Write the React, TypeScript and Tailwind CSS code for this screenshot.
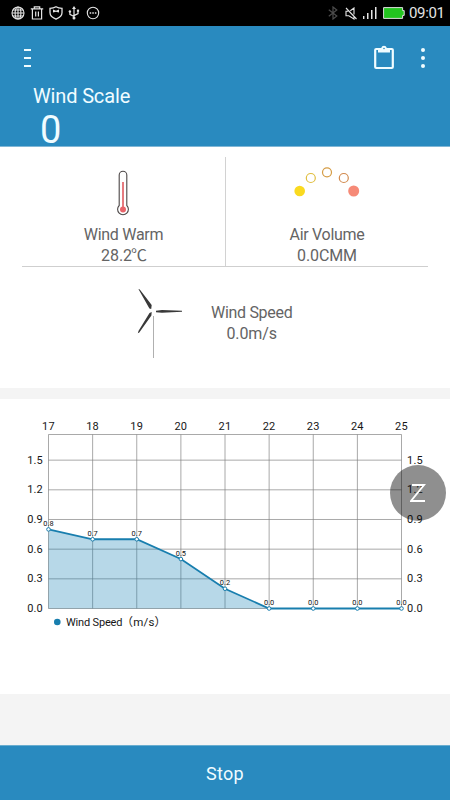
import React from "react";

const FONT = "font-['Roboto','Noto_Sans_CJK_SC',sans-serif]";

function StatusBar() {
  return (
    <div className="flex h-[26px] items-center justify-between bg-black pl-[11px] pr-[6px]">
      <div className="flex items-center gap-[5px] text-[#e4e4e4]">
        <svg width="14" height="14" viewBox="0 0 14 14" fill="none" stroke="currentColor" strokeWidth="1.1">
          <circle cx="7" cy="7" r="6" />
          <ellipse cx="7" cy="7" rx="2.9" ry="6" />
          <path d="M1 7h12M7 1v12M2 4h10M2 10h10" />
        </svg>
        <svg width="14" height="14" viewBox="0 0 14 14" fill="none" stroke="currentColor" strokeWidth="1.2">
          <path d="M0.8 2.8h12.4M4.3 2.6V.8h5.4v1.8M2.4 3v10h9.2V3M5.7 5.6v4.8M8.4 5.6v4.8" />
        </svg>
        <svg width="14" height="14" viewBox="0 0 14 14" fill="none" stroke="currentColor" strokeWidth="1.3">
          <path d="M7 .8C5 2 3 2.3 1 2.3v4.5c0 3 2.7 5 6 6.4 3.300-1.400 6-3.400 6-6.400V2.300C11 2.300 9 2 7 .8Z" />
          <path d="M4 3.600l3 1.200 3-1.200v3L7 5.800 4 6.600Z" fill="currentColor" stroke="none" />
        </svg>
        <svg className="-ml-px" width="14" height="14" viewBox="0 0 14 14" fill="none" stroke="currentColor" strokeWidth="1.2">
          <path d="M7 12V2M7 10.500L2.900 8.300V5.500M7 9.600l4-2V4.500" />
          <path d="M5 3l2-3 2 3Z" fill="currentColor" stroke="none" />
          <circle cx="7" cy="12" r="1.500" fill="currentColor" stroke="none" />
          <circle cx="2.900" cy="5.500" r="1.200" fill="currentColor" stroke="none" />
          <path d="M9.900 3.600h2.200v2.200H9.900z" fill="currentColor" stroke="none" />
        </svg>
        <svg width="14" height="14" viewBox="0 0 14 14" fill="none" stroke="currentColor" strokeWidth="1.100">
          <circle cx="7" cy="7" r="5.700" />
          <path d="M3.700 7h1.500M6.300 7h1.500M8.900 7h1.500" strokeWidth="1.400" />
        </svg>
      </div>
      <div className="flex items-center text-[#e4e4e4]">
        <svg className="mr-[7px]" width="10" height="14" viewBox="0 0 10 14" fill="none" stroke="#4c4c4c" strokeWidth="1.200">
          <path d="M.8 3.700l8 6.300L5 13V1l3.800 3-8 6.300" />
        </svg>
        <svg className="mr-[6px]" width="12" height="13" viewBox="0 0 12 13" fill="none" stroke="currentColor" strokeWidth="1.100">
          <path d="M1 1l10.500 11M3.200 4.200H1v4.500h2.800L9 12V9.500M5.300 3.800L9 1v6.500" />
        </svg>
        <svg className="mr-[6px]" width="14" height="12" viewBox="0 0 14 12" fill="currentColor">
          <path d="M0 9h1.400v3H0zM4 6h1.500v6H4zM8 3h1.500v9H8zM12 0h1.500v12H12z" />
        </svg>
        <svg className="mr-[4px]" width="22" height="12" viewBox="0 0 22 12">
          <path d="M.6.6h19v3h1.600v4.800h-1.600v3H.6z" fill="#22c51f" stroke="#dedede" strokeWidth="1" />
        </svg>
        <span className="w-[35px] whitespace-nowrap text-[15px] leading-[26px] tracking-[-0.35px]">09:01</span>
      </div>
    </div>
  );
}

function Header() {
  return (
    <header className="h-[121px] border-b border-[#81b7d6] bg-[#298abf] text-[#f0fcff]">
      <div className="flex h-[60px] items-center justify-between pl-6 pr-[25px] pt-[3px]">
        <svg width="8" height="20" viewBox="0 0 8 20" fill="currentColor">
          <path d="M0 1h7v2H0zM0 9h7v2H0zM0 17h7v2H0z" />
        </svg>
        <div className="flex items-center gap-[26px]">
          <svg className="-mt-px" width="22" height="26" viewBox="0 0 22 26" fill="none" stroke="currentColor">
            <rect x="2.200" y="5" width="17.600" height="19" rx="1" strokeWidth="2.200" />
            <path d="M5 4h3.200a2.900 2.900 0 0 1 5.600 0H17v4.500H5z" fill="currentColor" stroke="none" />
            <circle cx="11" cy="4.500" r=".8" fill="#298abf" stroke="none" />
          </svg>
          <svg width="4" height="22" viewBox="0 0 4 22" fill="currentColor">
            <circle cx="2" cy="3" r="2" />
            <circle cx="2" cy="11" r="2" />
            <circle cx="2" cy="19" r="2" />
          </svg>
        </div>
      </div>
      <div className="pl-[33px] text-[20px] leading-[21px] tracking-[-0.15px]">Wind Scale</div>
      <div className="pl-[40px] pt-[2px] text-[38px] font-normal leading-[42px]">0</div>
    </header>
  );
}

function Reading({ label, value }: { label: string; value: React.ReactNode }) {
  return (
    <div className="whitespace-nowrap text-center text-[16px] leading-[21px] text-[#646464]">
      <div className="tracking-[-0.3px]">{label}</div>
      <div className="tracking-[-0.1px]">{value}</div>
    </div>
  );
}

function Readings() {
  return (
    <section className="h-[241px] bg-white px-[22px] pt-[10px]">
      <div className="flex h-[110px] border-b border-[#cfcfcf]">
        <div className="flex w-[204px] flex-col items-center border-r border-[#d2d2d2] pt-[13px]">
          <svg className="-ml-px" width="16" height="48" viewBox="0 0 16 48" fill="none">
            <path d="M4.200 35.500V5a3.800 3.800 0 0 1 7.600 0v30.500a5.400 5.400 0 1 1-7.600 0Z" stroke="#4c4747" strokeWidth="1.100" />
            <path d="M8 12v27" stroke="#e77b80" strokeWidth="2" />
            <circle cx="8" cy="39.500" r="3" fill="#e8656b" />
          </svg>
          <div className="mt-[6px]">
            <Reading label="Wind Warm" value={<>28.2<span className="-ml-px tracking-[-1px]">℃</span></>} />
          </div>
        </div>
        <div className="flex flex-1 flex-col items-center pt-[8px]">
          <svg className="-ml-px" width="68" height="36" viewBox="0 0 68 36" fill="none" strokeWidth="1.200">
            <circle cx="6.700" cy="26" r="5.300" fill="#fada20" />
            <circle cx="17.800" cy="13" r="4.500" stroke="#e0be3f" />
            <circle cx="34" cy="7.300" r="4.500" stroke="#d59c45" />
            <circle cx="50.800" cy="13" r="4.500" stroke="#d28a4e" />
            <circle cx="60.700" cy="26" r="5.500" fill="#f68a77" />
          </svg>
          <div className="mt-[23px]">
            <Reading label="Air Volume" value="0.0CMM" />
          </div>
        </div>
      </div>
      <div className="flex pl-[114px] pt-[20px]">
        <svg width="48" height="72" viewBox="0 0 48 72" fill="#393939">
          <path d="M2.400 2l1.400.6L15.700 18l-.5 4-1.800-.6zM15.700 25l-.3 3.500L3.300 45.500l-1.500.7.800-2.500L13.500 26zM20 23.700l6-.8 20 .8v1L26 25.700l-6-.5z" />
          <path d="M17.500 29v42" stroke="#b0b0b0" strokeWidth="1" />
        </svg>
        <div className="ml-[27px] mt-[15px]">
          <Reading label="Wind Speed" value="0.0m/s" />
        </div>
      </div>
    </section>
  );
}

const speeds = [0.8, 0.7, 0.7, 0.5, 0.2, 0, 0, 0, 0];
const levels = [0, 0.3, 0.6, 0.9, 1.2, 1.5];
const px = (i: number) => 48.5 + i * 44.125;
const py = (v: number) => 209.500 - v * 98.900;

function Chart() {
  const line = speeds.map((v, i) => `${px(i)},${py(v)}`).join(" ");
  return (
    <svg width="450" height="294" viewBox="0 0 450 294" className="block">
      <g stroke="#808080" strokeOpacity="0.68" strokeWidth="1">
        {speeds.map((_, i) => (
          <path key={i} d={`M${px(i)} 35.500V209.500`} />
        ))}
        <path d="M48.500 35.500H401.500" />
        {levels.map((v) => (
          <path key={v} d={`M48.500 ${py(v)}H401.500`} />
        ))}
      </g>
      <polygon points={`${px(0)},209.500 ${line} ${px(8)},209.500`} fill="#1580b4" fillOpacity="0.31" />
      <polyline points={line} fill="none" stroke="#187eae" strokeWidth="1.800" />
      <g fontSize="11" fill="#171717" letterSpacing="0.2">
        {speeds.map((_, i) => (
          <text key={i} x={px(i)} y="31" textAnchor="middle">{17 + i}</text>
        ))}
        {levels.map((v) => (
          <React.Fragment key={v}>
            <text x="43" y={py(v) + 3.500} textAnchor="end">{v.toFixed(1)}</text>
            <text x="407" y={py(v) + 3.500}>{v.toFixed(1)}</text>
          </React.Fragment>
        ))}
      </g>
      {speeds.map((v, i) => (
        <g key={i}>
          <circle cx={px(i)} cy={py(v)} r="1.800" fill="white" stroke="#187eae" strokeWidth="1" />
          <text x={px(i)} y={py(v) - 3.500} fontSize="7.400" textAnchor="middle" fill="#111">{v.toFixed(1)}</text>
        </g>
      ))}
      <circle cx="57.300" cy="223" r="3.300" fill="#187eae" />
      <text x="66" y="227" fontSize="11" fill="#171717" textLength="56.500">Wind Speed</text>
      <text x="121.500" y="227" fontSize="11.500" fill="#171717" letterSpacing="0.200">（m/s）</text>
    </svg>
  );
}

export default function App() {
  return (
    <div className={`relative flex h-[800px] w-[450px] flex-col overflow-hidden bg-[#f4f4f4] ${FONT}`}>
      <StatusBar />
      <Header />
      <Readings />
      <section className="mt-[11px] h-[295px] bg-white">
        <Chart />
      </section>
      <button className="mt-auto h-[55px] border-t border-[#69adcf] bg-[#298abf] text-[18px] tracking-[0.3px] text-[#f0fcff]">Stop</button>
      <div className="absolute left-[390px] top-[465px] flex h-[56px] w-[56px] items-center justify-center rounded-full bg-black/44">
        <svg width="16" height="20" viewBox="0 0 16 20" fill="none" stroke="white" strokeWidth="1.900">
          <path d="M2 2h12L1 18h14" />
        </svg>
      </div>
    </div>
  );
}
